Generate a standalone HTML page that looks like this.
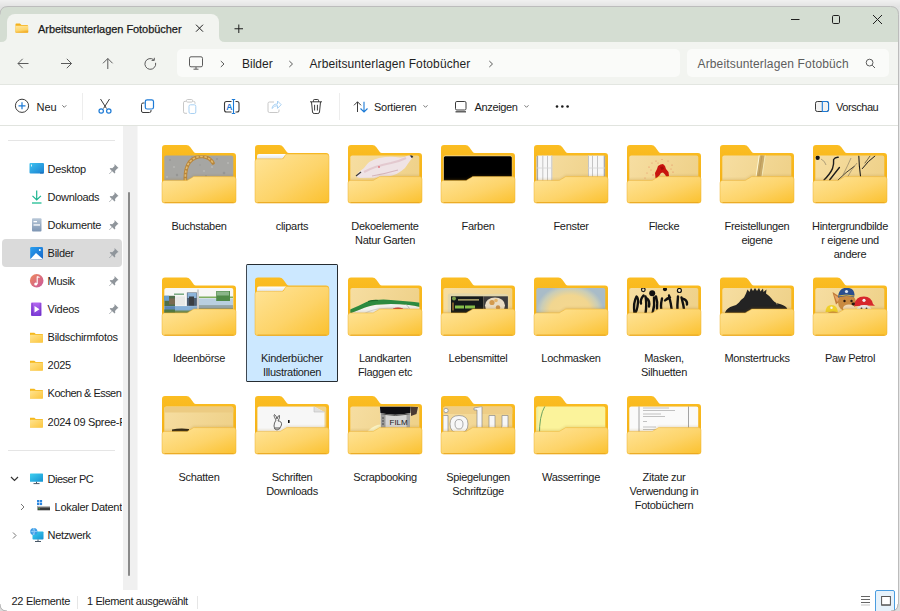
<!DOCTYPE html>
<html><head><meta charset="utf-8">
<style>
*{margin:0;padding:0;box-sizing:border-box}
html,body{width:900px;height:611px;overflow:hidden}
body{background:#fff;font-family:"Liberation Sans",sans-serif;position:relative;color:#1b1b1b}
.a{position:absolute}
</style></head><body>
<div class="a" style="left:0px;top:6px;width:900px;height:36px;background:#d4ddd2"></div><div class="a" style="left:0px;top:42px;width:900px;height:42px;background:#f2f4f0"></div><div class="a" style="left:7px;top:14px;width:212px;height:28px;background:#f2f4f0;border-radius:8px 8px 0 0"></div><div class="a" style="left:177px;top:49px;width:503px;height:28px;background:#fafbf9;border-radius:5px"></div><div class="a" style="left:687px;top:49px;width:202px;height:28px;background:#fafbf9;border-radius:5px"></div><div class="a" style="left:0px;top:84px;width:900px;height:1px;background:#e3e6e1"></div><div class="a" style="left:0px;top:125px;width:900px;height:1px;background:#e1e4df"></div><div class="a" style="left:38px;top:22.00px;font-size:11px;line-height:14px;letter-spacing:-0.05px;color:#1a1a1a;font-weight:normal;white-space:nowrap;-webkit-text-stroke:0.25px #1a1a1a;">Arbeitsunterlagen Fotobücher</div><div class="a" style="left:242px;top:56.00px;font-size:12px;line-height:16px;letter-spacing:0px;color:#1f1f1f;font-weight:normal;white-space:nowrap;">Bilder</div><div class="a" style="left:309.5px;top:56.00px;font-size:12px;line-height:16px;letter-spacing:0.1px;color:#1f1f1f;font-weight:normal;white-space:nowrap;">Arbeitsunterlagen Fotobücher</div><div class="a" style="left:697.5px;top:56.00px;font-size:12px;line-height:16px;letter-spacing:0.15px;color:#5d5d5d;font-weight:normal;white-space:nowrap;">Arbeitsunterlagen Fotobüch</div><div class="a" style="left:36.6px;top:100.00px;font-size:11px;line-height:14px;letter-spacing:-0.1px;color:#1b1b1b;font-weight:normal;white-space:nowrap;">Neu</div><div class="a" style="left:82px;top:93px;width:1px;height:27px;background:#ededed"></div><div class="a" style="left:339px;top:93px;width:1px;height:27px;background:#ededed"></div><div class="a" style="left:374px;top:100.00px;font-size:11px;line-height:14px;letter-spacing:-0.25px;color:#1b1b1b;font-weight:normal;white-space:nowrap;">Sortieren</div><div class="a" style="left:474.5px;top:100.00px;font-size:11px;line-height:14px;letter-spacing:-0.35px;color:#1b1b1b;font-weight:normal;white-space:nowrap;">Anzeigen</div><div class="a" style="left:836px;top:100.00px;font-size:11px;line-height:14px;letter-spacing:-0.45px;color:#1b1b1b;font-weight:normal;white-space:nowrap;">Vorschau</div><div class="a" style="left:8px;top:140px;width:107px;height:1px;background:#e5e5e5"></div><div class="a" style="left:2px;top:239px;width:120px;height:28px;background:#dadada;border-radius:4px"></div><div class="a" style="left:47.6px;top:162.00px;font-size:11px;line-height:14px;letter-spacing:-0.3px;color:#1b1b1b;font-weight:normal;white-space:nowrap;">Desktop</div><div class="a" style="left:47.6px;top:190.00px;font-size:11px;line-height:14px;letter-spacing:-0.3px;color:#1b1b1b;font-weight:normal;white-space:nowrap;">Downloads</div><div class="a" style="left:47.6px;top:218.00px;font-size:11px;line-height:14px;letter-spacing:-0.3px;color:#1b1b1b;font-weight:normal;white-space:nowrap;">Dokumente</div><div class="a" style="left:47.6px;top:246.00px;font-size:11px;line-height:14px;letter-spacing:-0.3px;color:#1b1b1b;font-weight:normal;white-space:nowrap;">Bilder</div><div class="a" style="left:47.6px;top:274.00px;font-size:11px;line-height:14px;letter-spacing:-0.3px;color:#1b1b1b;font-weight:normal;white-space:nowrap;">Musik</div><div class="a" style="left:47.6px;top:302.00px;font-size:11px;line-height:14px;letter-spacing:-0.3px;color:#1b1b1b;font-weight:normal;white-space:nowrap;">Videos</div><div class="a" style="left:47.6px;top:330.00px;font-size:11px;line-height:14px;letter-spacing:-0.3px;color:#1b1b1b;font-weight:normal;white-space:nowrap;width:74.5px;overflow:hidden;">Bildschirmfotos</div><div class="a" style="left:47.6px;top:358.00px;font-size:11px;line-height:14px;letter-spacing:-0.3px;color:#1b1b1b;font-weight:normal;white-space:nowrap;width:74.5px;overflow:hidden;">2025</div><div class="a" style="left:47.6px;top:386.00px;font-size:11px;line-height:14px;letter-spacing:-0.55px;color:#1b1b1b;font-weight:normal;white-space:nowrap;width:74.5px;overflow:hidden;">Kochen &amp; Essen</div><div class="a" style="left:47.6px;top:415.00px;font-size:11px;line-height:14px;letter-spacing:-0.3px;color:#1b1b1b;font-weight:normal;white-space:nowrap;width:74.5px;overflow:hidden;">2024 09 Spree-Fahrt</div><div class="a" style="left:8px;top:450px;width:107px;height:1px;background:#e5e5e5"></div><div class="a" style="left:47.6px;top:472.00px;font-size:11px;line-height:14px;letter-spacing:-0.5px;color:#1b1b1b;font-weight:normal;white-space:nowrap;">Dieser PC</div><div class="a" style="left:54.6px;top:500.00px;font-size:11px;line-height:14px;letter-spacing:-0.3px;color:#1b1b1b;font-weight:normal;white-space:nowrap;width:67.5px;overflow:hidden;">Lokaler Datenträger (C:)</div><div class="a" style="left:47.6px;top:528.00px;font-size:11px;line-height:14px;letter-spacing:-0.35px;color:#1b1b1b;font-weight:normal;white-space:nowrap;">Netzwerk</div><div class="a" style="left:123px;top:126px;width:14px;height:464px;background:#f0f0f0"></div><div class="a" style="left:137px;top:126px;width:1px;height:464px;background:#f7f7f7"></div><div class="a" style="left:128px;top:192px;width:2px;height:384px;background:#8a8a8a;border-radius:1px"></div><div class="a" style="left:11.5px;top:594.00px;font-size:11px;line-height:14px;letter-spacing:-0.3px;color:#1b1b1b;font-weight:normal;white-space:nowrap;">22 Elemente</div><div class="a" style="left:77px;top:596px;width:1px;height:13px;background:#e6e6e6"></div><div class="a" style="left:87px;top:594.00px;font-size:11px;line-height:14px;letter-spacing:-0.38px;color:#1b1b1b;font-weight:normal;white-space:nowrap;">1 Element ausgewählt</div><div class="a" style="left:197px;top:596px;width:1px;height:13px;background:#e6e6e6"></div><div class="a" style="left:875px;top:590px;width:20px;height:23px;background:#e6f2fb;border:1px solid #4a9de0;border-radius:2px"></div><div class="a" style="left:246px;top:264px;width:92px;height:118px;background:#cce8ff;border:1px solid #262c31;border-left-color:#3e4852;border-radius:1.5px"></div><div class="a" style="left:139px;width:120px;text-align:center;top:219.00px;font-size:11px;line-height:14px;letter-spacing:-0.3px;color:#1b1b1b;font-weight:normal;white-space:nowrap;">Buchstaben</div><div class="a" style="left:232px;width:120px;text-align:center;top:219.00px;font-size:11px;line-height:14px;letter-spacing:-0.3px;color:#1b1b1b;font-weight:normal;white-space:nowrap;">cliparts</div><div class="a" style="left:325px;width:120px;text-align:center;top:219.00px;font-size:11px;line-height:14px;letter-spacing:-0.3px;color:#1b1b1b;font-weight:normal;white-space:nowrap;">Dekoelemente</div><div class="a" style="left:325px;width:120px;text-align:center;top:233.00px;font-size:11px;line-height:14px;letter-spacing:-0.3px;color:#1b1b1b;font-weight:normal;white-space:nowrap;">Natur Garten</div><div class="a" style="left:418px;width:120px;text-align:center;top:219.00px;font-size:11px;line-height:14px;letter-spacing:-0.3px;color:#1b1b1b;font-weight:normal;white-space:nowrap;">Farben</div><div class="a" style="left:511px;width:120px;text-align:center;top:219.00px;font-size:11px;line-height:14px;letter-spacing:-0.3px;color:#1b1b1b;font-weight:normal;white-space:nowrap;">Fenster</div><div class="a" style="left:604px;width:120px;text-align:center;top:219.00px;font-size:11px;line-height:14px;letter-spacing:-0.3px;color:#1b1b1b;font-weight:normal;white-space:nowrap;">Flecke</div><div class="a" style="left:697px;width:120px;text-align:center;top:219.00px;font-size:11px;line-height:14px;letter-spacing:-0.3px;color:#1b1b1b;font-weight:normal;white-space:nowrap;">Freistellungen</div><div class="a" style="left:697px;width:120px;text-align:center;top:233.00px;font-size:11px;line-height:14px;letter-spacing:-0.3px;color:#1b1b1b;font-weight:normal;white-space:nowrap;">eigene</div><div class="a" style="left:790px;width:120px;text-align:center;top:219.00px;font-size:11px;line-height:14px;letter-spacing:-0.3px;color:#1b1b1b;font-weight:normal;white-space:nowrap;">Hintergrundbilde</div><div class="a" style="left:790px;width:120px;text-align:center;top:233.00px;font-size:11px;line-height:14px;letter-spacing:-0.3px;color:#1b1b1b;font-weight:normal;white-space:nowrap;">r eigene und</div><div class="a" style="left:790px;width:120px;text-align:center;top:247.00px;font-size:11px;line-height:14px;letter-spacing:-0.3px;color:#1b1b1b;font-weight:normal;white-space:nowrap;">andere</div><div class="a" style="left:139px;width:120px;text-align:center;top:351.00px;font-size:11px;line-height:14px;letter-spacing:-0.3px;color:#1b1b1b;font-weight:normal;white-space:nowrap;">Ideenbörse</div><div class="a" style="left:232px;width:120px;text-align:center;top:351.00px;font-size:11px;line-height:14px;letter-spacing:-0.3px;color:#1b1b1b;font-weight:normal;white-space:nowrap;">Kinderbücher</div><div class="a" style="left:232px;width:120px;text-align:center;top:365.00px;font-size:11px;line-height:14px;letter-spacing:-0.3px;color:#1b1b1b;font-weight:normal;white-space:nowrap;">Illustrationen</div><div class="a" style="left:325px;width:120px;text-align:center;top:351.00px;font-size:11px;line-height:14px;letter-spacing:-0.3px;color:#1b1b1b;font-weight:normal;white-space:nowrap;">Landkarten</div><div class="a" style="left:325px;width:120px;text-align:center;top:365.00px;font-size:11px;line-height:14px;letter-spacing:-0.3px;color:#1b1b1b;font-weight:normal;white-space:nowrap;">Flaggen etc</div><div class="a" style="left:418px;width:120px;text-align:center;top:351.00px;font-size:11px;line-height:14px;letter-spacing:-0.3px;color:#1b1b1b;font-weight:normal;white-space:nowrap;">Lebensmittel</div><div class="a" style="left:511px;width:120px;text-align:center;top:351.00px;font-size:11px;line-height:14px;letter-spacing:-0.3px;color:#1b1b1b;font-weight:normal;white-space:nowrap;">Lochmasken</div><div class="a" style="left:604px;width:120px;text-align:center;top:351.00px;font-size:11px;line-height:14px;letter-spacing:-0.3px;color:#1b1b1b;font-weight:normal;white-space:nowrap;">Masken,</div><div class="a" style="left:604px;width:120px;text-align:center;top:365.00px;font-size:11px;line-height:14px;letter-spacing:-0.3px;color:#1b1b1b;font-weight:normal;white-space:nowrap;">Silhuetten</div><div class="a" style="left:697px;width:120px;text-align:center;top:351.00px;font-size:11px;line-height:14px;letter-spacing:-0.3px;color:#1b1b1b;font-weight:normal;white-space:nowrap;">Monstertrucks</div><div class="a" style="left:790px;width:120px;text-align:center;top:351.00px;font-size:11px;line-height:14px;letter-spacing:-0.3px;color:#1b1b1b;font-weight:normal;white-space:nowrap;">Paw Petrol</div><div class="a" style="left:139px;width:120px;text-align:center;top:470.00px;font-size:11px;line-height:14px;letter-spacing:-0.3px;color:#1b1b1b;font-weight:normal;white-space:nowrap;">Schatten</div><div class="a" style="left:232px;width:120px;text-align:center;top:470.00px;font-size:11px;line-height:14px;letter-spacing:-0.3px;color:#1b1b1b;font-weight:normal;white-space:nowrap;">Schriften</div><div class="a" style="left:232px;width:120px;text-align:center;top:484.00px;font-size:11px;line-height:14px;letter-spacing:-0.3px;color:#1b1b1b;font-weight:normal;white-space:nowrap;">Downloads</div><div class="a" style="left:325px;width:120px;text-align:center;top:470.00px;font-size:11px;line-height:14px;letter-spacing:-0.3px;color:#1b1b1b;font-weight:normal;white-space:nowrap;">Scrapbooking</div><div class="a" style="left:418px;width:120px;text-align:center;top:470.00px;font-size:11px;line-height:14px;letter-spacing:-0.3px;color:#1b1b1b;font-weight:normal;white-space:nowrap;">Spiegelungen</div><div class="a" style="left:418px;width:120px;text-align:center;top:484.00px;font-size:11px;line-height:14px;letter-spacing:-0.3px;color:#1b1b1b;font-weight:normal;white-space:nowrap;">Schriftzüge</div><div class="a" style="left:511px;width:120px;text-align:center;top:470.00px;font-size:11px;line-height:14px;letter-spacing:-0.3px;color:#1b1b1b;font-weight:normal;white-space:nowrap;">Wasserringe</div><div class="a" style="left:604px;width:120px;text-align:center;top:470.00px;font-size:11px;line-height:14px;letter-spacing:-0.3px;color:#1b1b1b;font-weight:normal;white-space:nowrap;">Zitate zur</div><div class="a" style="left:604px;width:120px;text-align:center;top:484.00px;font-size:11px;line-height:14px;letter-spacing:-0.3px;color:#1b1b1b;font-weight:normal;white-space:nowrap;">Verwendung in</div><div class="a" style="left:604px;width:120px;text-align:center;top:498.00px;font-size:11px;line-height:14px;letter-spacing:-0.3px;color:#1b1b1b;font-weight:normal;white-space:nowrap;">Fotobüchern</div>
<svg class="a" style="left:0;top:0" width="900" height="611" viewBox="0 0 900 611">
<path d="M1,42 L7,42 L7,36 Q7,42 1,42Z" fill="#f2f4f0"/><path d="M219,36 Q219,42 225,42 L219,42Z" fill="#f2f4f0"/><defs><linearGradient id="tabF" x1="0" y1="0" x2="0.3" y2="1"><stop offset="0" stop-color="#ffe69e"/><stop offset="0.7" stop-color="#fdd56a"/><stop offset="1" stop-color="#f3b02a"/></linearGradient></defs><path d="M15.5,24.3 q0,-0.8 0.8,-0.8 h3.6 l1.6,1.5 h6.3 v7.5 h-12.3z" fill="#f4b11c"/><rect x="15.5" y="25.8" width="12.8" height="7" rx="0.8" fill="url(#tabF)"/><path d="M196,24.7 L203,31.7 M203,24.7 L196,31.7" fill="none" stroke="#1f1f1f" stroke-width="1" stroke="#3a3a3a"/><path d="M238.8,24.5 V33 M234.5,28.75 H243" fill="none" stroke="#1f1f1f" stroke-width="1" stroke="#3a3a3a"/><path d="M791,19.5 H799.5" fill="none" stroke="#1f1f1f" stroke-width="1"/><rect x="832.5" y="15.5" width="7" height="8" rx="1.2" fill="none" stroke="#1f1f1f" stroke-width="1"/><path d="M873,15 L882,24 M882,15 L873,24" fill="none" stroke="#1f1f1f" stroke-width="1"/><path d="M28.5,63.5 H18 M22.7,58.8 L18,63.5 L22.7,68.2" fill="none" stroke="#5b5b5b" stroke-width="1"/><path d="M61,63.5 H71.5 M66.8,58.8 L71.5,63.5 L66.8,68.2" fill="none" stroke="#5b5b5b" stroke-width="1"/><path d="M107.8,69 V58.5 M103,63.3 L107.8,58.5 L112.6,63.3" fill="none" stroke="#5b5b5b" stroke-width="1"/><path d="M155.6,62.8 A5.4,5.4 0 1 1 153.8,59.8 M154.3,57.8 V60.4 H151.6" fill="none" stroke="#5b5b5b" stroke-width="1"/><rect x="189.5" y="56.8" width="13" height="10" rx="1.5" fill="none" stroke="#5b5b5b" stroke-width="1" stroke="#4a4a4a"/><path d="M193.5,69.2 H198.5 M196,67 V69" fill="none" stroke="#5b5b5b" stroke-width="1" stroke="#4a4a4a"/><path d="M220.8,61 L224,64 L220.8,67" fill="none" stroke="#5b5b5b" stroke-width="1" stroke="#4a4a4a"/><path d="M289.3,61 L292.5,64 L289.3,67" fill="none" stroke="#5b5b5b" stroke-width="1" stroke="#4a4a4a"/><path d="M489.3,61 L492.5,64 L489.3,67" fill="none" stroke="#5b5b5b" stroke-width="1" stroke="#4a4a4a"/><circle cx="869.6" cy="62.6" r="3.4" fill="none" stroke="#5b5b5b" stroke-width="1" stroke="#333"/><path d="M872.2,65.2 L875,68" fill="none" stroke="#5b5b5b" stroke-width="1" stroke="#333" stroke-width="1.2"/><circle cx="22" cy="105.8" r="6.6" fill="none" stroke="#3b3b3b" stroke-width="1"/><path d="M22,102.3 V109.3 M18.5,105.8 H25.5" fill="none" stroke="#1c7ad6" stroke-width="1.2"/><path d="M62.3,105.3 L64.3,107.3 L66.3,105.3" fill="none" stroke="#666" stroke-width="0.9"/><path d="M100.5,99 L106.5,108.5 M109.5,99 L103.5,108.5" fill="none" stroke="#3b3b3b" stroke-width="1"/><circle cx="101.2" cy="111" r="2.2" fill="none" stroke="#1c7ad6" stroke-width="1.2"/><circle cx="108.8" cy="111" r="2.2" fill="none" stroke="#1c7ad6" stroke-width="1.2"/><path d="M144.5,103 h-1.5 a1.5,1.5 0 0 0 -1.5,1.5 v6.5 a1.5,1.5 0 0 0 1.5,1.5 h6.5 a1.5,1.5 0 0 0 1.5,-1.5 v-1" fill="none" stroke="#3b3b3b" stroke-width="1"/><rect x="145.3" y="99.8" width="8.2" height="9.2" rx="1.8" fill="none" stroke="#1c7ad6" stroke-width="1.2"/><path d="M186,101.3 h-1 a1.5,1.5 0 0 0 -1.5,1.5 v9 a1.5,1.5 0 0 0 1.5,1.5 h2 M192.5,101.3 h1 a1.5,1.5 0 0 1 1.5,1.5 v1" fill="none" stroke="#c8c8c8" stroke-width="1"/><rect x="186.5" y="99.5" width="6" height="2.6" rx="1" fill="none" stroke="#c8c8c8"/><rect x="189" y="104.8" width="6.8" height="8.7" rx="1.5" fill="none" stroke="#a9d1f3" stroke-width="1"/><path d="M231.5,101.5 h-5 a2,2 0 0 0 -2,2 v6.5 a2,2 0 0 0 2,2 h5 M235.5,101.5 h1.5 a2,2 0 0 1 2,2 v6.5 a2,2 0 0 1 -2,2 h-1.5" fill="none" stroke="#3b3b3b" stroke-width="1.1"/><path d="M233.5,99.5 V113.5 M231.8,99.5 H235.2 M231.8,113.5 H235.2" fill="none" stroke="#1c7ad6" stroke-width="1.1"/><text x="226.2" y="110.2" font-family="Liberation Sans" font-size="8.5" font-weight="bold" fill="#1c7ad6">A</text><path d="M274,102 h-4.5 a1.5,1.5 0 0 0 -1.5,1.5 v7.5 a1.5,1.5 0 0 0 1.5,1.5 h8 a1.5,1.5 0 0 0 1.5,-1.5 v-1.5" fill="none" stroke="#c8c8c8"/><path d="M272,108.5 q0.5,-4.5 5.5,-4.5 v-3 l3.7,3.7 l-3.7,3.7 v-2.8 q-3.5,0 -5.5,2.9z" fill="none" stroke="#a9d1f3" stroke-width="1"/><path d="M310,101.8 H322 M313.5,101.8 V100.3 a0.8,0.8 0 0 1 0.8,-0.8 h3.4 a0.8,0.8 0 0 1 0.8,0.8 v1.5 M311.5,102 l1,10 a1.7,1.7 0 0 0 1.7,1.5 h3.6 a1.7,1.7 0 0 0 1.7,-1.5 l1,-10 M314.6,104.8 V110.5 M317.4,104.8 V110.5" fill="none" stroke="#3b3b3b" stroke-width="1"/><path d="M357.5,112 V101.8 M354,105.3 L357.5,101.8 L361,105.3" fill="none" stroke="#3b3b3b" stroke-width="1"/><path d="M364,101.8 V112 M360.5,108.5 L364,112 L367.5,108.5" fill="none" stroke="#1c7ad6" stroke-width="1.1"/><path d="M423.5,105.3 L425.5,107.3 L427.5,105.3" fill="none" stroke="#666" stroke-width="0.9"/><rect x="455.5" y="101.5" width="10.5" height="8.5" rx="1.3" fill="none" stroke="#3b3b3b" stroke-width="1"/><path d="M455.5,111.8 H466" fill="none" stroke="#3b3b3b" stroke-width="1.2"/><path d="M524.5,105.3 L526.5,107.3 L528.5,105.3" fill="none" stroke="#666" stroke-width="0.9"/><circle cx="557" cy="106.5" r="1.3" fill="#1b1b1b"/><circle cx="562.3" cy="106.5" r="1.3" fill="#1b1b1b"/><circle cx="567.6" cy="106.5" r="1.3" fill="#1b1b1b"/><rect x="815.5" y="101.5" width="13" height="10" rx="1.8" fill="#f2f2f2" stroke="#3b3b3b"/><path d="M822.3,101.5 h4.5 a1.8,1.8 0 0 1 1.8,1.8 v6.4 a1.8,1.8 0 0 1 -1.8,1.8 h-4.5 z" fill="none" stroke="#1c7ad6" stroke-width="1.1"/><path d="M114.5,164.0 l4,4 l-1.2,0.6 l-2.3,2.3 l0.3,1.8 l-0.8,0.8 l-2.2,-2.2 l-2.8,2.8 l-0.4,0 l0,-0.4 l2.8,-2.8 l-2.2,-2.2 l0.8,-0.8 l1.8,0.3 l2.3,-2.3z" fill="#8f959b"/><path d="M114.5,192.0 l4,4 l-1.2,0.6 l-2.3,2.3 l0.3,1.8 l-0.8,0.8 l-2.2,-2.2 l-2.8,2.8 l-0.4,0 l0,-0.4 l2.8,-2.8 l-2.2,-2.2 l0.8,-0.8 l1.8,0.3 l2.3,-2.3z" fill="#8f959b"/><path d="M114.5,220.0 l4,4 l-1.2,0.6 l-2.3,2.3 l0.3,1.8 l-0.8,0.8 l-2.2,-2.2 l-2.8,2.8 l-0.4,0 l0,-0.4 l2.8,-2.8 l-2.2,-2.2 l0.8,-0.8 l1.8,0.3 l2.3,-2.3z" fill="#8f959b"/><path d="M114.5,248.0 l4,4 l-1.2,0.6 l-2.3,2.3 l0.3,1.8 l-0.8,0.8 l-2.2,-2.2 l-2.8,2.8 l-0.4,0 l0,-0.4 l2.8,-2.8 l-2.2,-2.2 l0.8,-0.8 l1.8,0.3 l2.3,-2.3z" fill="#8f959b"/><path d="M114.5,276.0 l4,4 l-1.2,0.6 l-2.3,2.3 l0.3,1.8 l-0.8,0.8 l-2.2,-2.2 l-2.8,2.8 l-0.4,0 l0,-0.4 l2.8,-2.8 l-2.2,-2.2 l0.8,-0.8 l1.8,0.3 l2.3,-2.3z" fill="#8f959b"/><path d="M114.5,304.0 l4,4 l-1.2,0.6 l-2.3,2.3 l0.3,1.8 l-0.8,0.8 l-2.2,-2.2 l-2.8,2.8 l-0.4,0 l0,-0.4 l2.8,-2.8 l-2.2,-2.2 l0.8,-0.8 l1.8,0.3 l2.3,-2.3z" fill="#8f959b"/><defs><linearGradient id="gDesk" x1="0" y1="0" x2="1" y2="1"><stop offset="0" stop-color="#3ec3f0"/><stop offset="1" stop-color="#1a7fd0"/></linearGradient><linearGradient id="gMus" x1="0" y1="0" x2="1" y2="1"><stop offset="0" stop-color="#f08a5a"/><stop offset="1" stop-color="#c8569e"/></linearGradient><linearGradient id="gVid" x1="0" y1="0" x2="0" y2="1"><stop offset="0" stop-color="#b468f0"/><stop offset="1" stop-color="#7a3bd6"/></linearGradient><linearGradient id="gDoc" x1="0" y1="0" x2="0" y2="1"><stop offset="0" stop-color="#b9c8d8"/><stop offset="1" stop-color="#7d95b3"/></linearGradient><linearGradient id="gPic" x1="0" y1="0" x2="1" y2="1"><stop offset="0" stop-color="#2aa0f0"/><stop offset="1" stop-color="#1666c8"/></linearGradient><linearGradient id="gSF" x1="0" y1="0" x2="1" y2="1"><stop offset="0" stop-color="#ffe38f"/><stop offset="1" stop-color="#fcc63e"/></linearGradient><linearGradient id="gPC" x1="0" y1="0" x2="1" y2="1"><stop offset="0" stop-color="#3fd0f0"/><stop offset="1" stop-color="#1592d2"/></linearGradient></defs><rect x="29.5" y="163" width="14.5" height="10.5" rx="1" fill="url(#gDesk)"/><rect x="31" y="164.5" width="0.8" height="2" fill="#fff"/><rect x="40" y="172.5" width="3.5" height="1" fill="#1764b0"/><path d="M36.7,190.5 V200 M32.5,195.8 L36.7,200 L40.9,195.8" fill="none" stroke="#1cb58f" stroke-width="1.2"/><rect x="32" y="202.3" width="9.5" height="1.4" fill="#2fc29a"/><rect x="32" y="218.2" width="9.5" height="13.3" rx="1" fill="url(#gDoc)"/><rect x="33.5" y="221" width="3.5" height="1.3" fill="#fff"/><rect x="33.5" y="224.3" width="6.5" height="1.3" fill="#fff"/><rect x="30.2" y="247" width="12.8" height="12.3" rx="1.3" fill="url(#gPic)"/><path d="M30.5,259 L36,253 L42.8,259 Z" fill="#fff"/><circle cx="39.8" cy="250" r="1" fill="#fff"/><circle cx="36.7" cy="280.8" r="6.8" fill="url(#gMus)"/><path d="M37.2,276.5 V284 M37.2,276.5 l2.3,1" fill="none" stroke="#fff" stroke-width="1.1"/><circle cx="35.8" cy="284" r="1.6" fill="#fff"/><rect x="31" y="302.5" width="10.5" height="13.5" rx="1" fill="url(#gVid)"/><path d="M34.5,306 L39.5,309.3 L34.5,312.6Z" fill="#fff"/><path d="M32.2,303.5 v11.5 M40.3,303.5 v11.5" stroke="#5a22a8" stroke-width="0.8" stroke-dasharray="1,1"/><path d="M30,332.8 h4.3 l1.5,1.2 h7 v8.6 h-12.8z" fill="#f5b81c"/><rect x="30" y="334.8" width="12.8" height="7.8" rx="0.6" fill="url(#gSF)"/><path d="M30,360.8 h4.3 l1.5,1.2 h7 v8.6 h-12.8z" fill="#f5b81c"/><rect x="30" y="362.8" width="12.8" height="7.8" rx="0.6" fill="url(#gSF)"/><path d="M30,388.8 h4.3 l1.5,1.2 h7 v8.6 h-12.8z" fill="#f5b81c"/><rect x="30" y="390.8" width="12.8" height="7.8" rx="0.6" fill="url(#gSF)"/><path d="M30,417.8 h4.3 l1.5,1.2 h7 v8.6 h-12.8z" fill="#f5b81c"/><rect x="30" y="419.8" width="12.8" height="7.8" rx="0.6" fill="url(#gSF)"/><path d="M11,477 L14.5,480.5 L18,477" fill="none" stroke="#333" stroke-width="1.2"/><rect x="30" y="473.5" width="13" height="8.3" rx="0.6" fill="url(#gPC)"/><path d="M36.5,481.8 v1.6 M33.5,483.6 h6" stroke="#345" stroke-width="0.9"/><path d="M21,504 L24,507 L21,510" fill="none" stroke="#777" stroke-width="1"/><rect x="37" y="500" width="2.3" height="2.3" fill="#2b86e0"/><rect x="39.8" y="500" width="2.3" height="2.3" fill="#2b86e0"/><rect x="37" y="502.8" width="2.3" height="2.3" fill="#2b86e0"/><rect x="39.8" y="502.8" width="2.3" height="2.3" fill="#2b86e0"/><path d="M37.5,506 h12.5 v4.3 h-12.5z" fill="#3a3a3a"/><path d="M37.5,506 h12.5 v1.4 h-12.5z" fill="#bbb"/><rect x="38.5" y="508.2" width="1.2" height="1" fill="#4c4"/><path d="M13,532.5 L16,535.5 L13,538.5" fill="none" stroke="#777" stroke-width="1"/><rect x="32.5" y="531.5" width="11" height="8" rx="0.8" fill="url(#gPC)"/><path d="M38,539.5 v1.5 M35,541.5 h6" stroke="#345" stroke-width="0.9"/><circle cx="33.8" cy="531.5" r="3.6" fill="#3d9de6"/><path d="M30.5,531.5 h6.6 M33.8,528 q-2,3.5 0,7 q2,-3.5 0,-7" fill="none" stroke="#bfe3ff" stroke-width="0.5"/><path d="M861,596.5 h9 M861,599.5 h9 M861,602.5 h9" stroke="#555" stroke-width="0.9"/><path d="M861,605 h9" stroke="#c5c5c5" stroke-width="1"/><rect x="881.6" y="596.5" width="8.8" height="8.3" fill="#fff" stroke="#555" stroke-width="1"/><path d="M881.3,605.3 h9.4" stroke="#666" stroke-width="1"/><defs><linearGradient id="fBack" x1="0" y1="0" x2="0" y2="1"><stop offset="0" stop-color="#fbbd22"/><stop offset="1" stop-color="#f0ab12"/></linearGradient><linearGradient id="fFront" x1="0" y1="0" x2="1" y2="1"><stop offset="0" stop-color="#ffe498"/><stop offset="0.55" stop-color="#fdd46a"/><stop offset="1" stop-color="#fbc12e"/></linearGradient><linearGradient id="fPaper" x1="0" y1="0" x2="0" y2="1"><stop offset="0" stop-color="#ffffff"/><stop offset="1" stop-color="#dfe3ea"/></linearGradient><linearGradient id="thBG" x1="0" y1="0" x2="1" y2="0.3"><stop offset="0" stop-color="#f7dfa4"/><stop offset="1" stop-color="#efd28b"/></linearGradient><filter id="fblur" x="-10%" y="-10%" width="120%" height="120%"><feGaussianBlur stdDeviation="1"/></filter><clipPath id="inset"><rect x="2.3" y="10.5" width="69" height="28" rx="2"/></clipPath><radialGradient id="lochG" gradientUnits="userSpaceOnUse" cx="36" cy="34" r="34" gradientTransform="translate(36 34) scale(1 .8) translate(-36 -34)"><stop offset="0" stop-color="#f5d890"/><stop offset="0.6" stop-color="#f1d690"/><stop offset="0.85" stop-color="#c9cdb8"/><stop offset="1" stop-color="#a9bcc8"/></radialGradient></defs><g transform="translate(162,145)"><path d="M0,3 Q0,0 3,0 H24.3 Q26.8,0 28.4,2.2 L32,7.2 Q32.6,8 33.8,8 H71 Q74,8 74,11 V55 Q74,58 71,58 H3 Q0,58 0,55 Z" fill="url(#fBack)"/><g clip-path="url(#inset)"><rect x="0" y="0" width="74" height="40" fill="#a6a6a3"/><g fill="#939391" opacity=".8"><circle cx="8" cy="15" r="1"/><circle cx="15" cy="30" r="1.2"/><circle cx="55" cy="14" r="1"/><circle cx="62" cy="28" r="1.3"/><circle cx="44" cy="31" r="1"/><circle cx="30" cy="12" r="0.8"/><circle cx="38" cy="20" r="0.7"/></g><g fill="#bcbcb9" opacity=".8"><circle cx="12" cy="22" r="1"/><circle cx="50" cy="22" r="1.1"/><circle cx="66" cy="18" r="1"/><circle cx="42" cy="26" r="0.9"/><circle cx="5" cy="32" r="1"/></g><path d="M23.5,36 Q22.5,24 27.5,17 Q33,11 41,11.5 Q48,12.5 51,18" fill="none" stroke="#b8863c" stroke-width="3.6" stroke-linecap="round"/><path d="M23.5,36 Q22.5,24 27.5,17 Q33,11 41,11.5 Q48,12.5 51,18" fill="none" stroke="#e2bb70" stroke-width="1.6" stroke-dasharray="2.5,1.5"/></g><g clip-path="url(#inset)"><path d="M0,37.9 Q0,35.4 2.5,35.4 H24.5 Q26.1,35.4 26.7,34.5 L30.3,32.5 Q30.9,31.599999999999998 32.5,31.599999999999998 H71.5 Q74,31.599999999999998 74,34.099999999999994 V55.5 Q74,58 71.5,58 H2.5 Q0,58 0,55.5 Z" transform="translate(0,-1.6)" fill="#9a6a10" opacity=".16" filter="url(#fblur)"/></g><path d="M0,37.9 Q0,35.4 2.5,35.4 H24.5 Q26.1,35.4 26.7,34.5 L30.3,32.5 Q30.9,31.599999999999998 32.5,31.599999999999998 H71.5 Q74,31.599999999999998 74,34.099999999999994 V55.5 Q74,58 71.5,58 H2.5 Q0,58 0,55.5 Z" fill="url(#fFront)" stroke="#efb32e" stroke-width="0.5"/><path d="M2.5,57.6 H71.5" stroke="#e9a51c" stroke-width="0.9"/></g><g transform="translate(255,145)"><path d="M0,3 Q0,0 3,0 H24.3 Q26.8,0 28.4,2.2 L32,7.2 Q32.6,8 33.8,8 H71 Q74,8 74,11 V55 Q74,58 71,58 H3 Q0,58 0,55 Z" fill="url(#fBack)"/><path d="M2,11 Q2,9 4,9 H31.5 L27,14.2 H2Z" fill="url(#fPaper)"/><path d="M0,16.3 Q0,13.8 2.5,13.8 H26.5 Q28.1,13.8 28.7,12.9 L30.3,9.9 Q30.9,9.0 32.5,9.0 H71.5 Q74,9.0 74,11.5 V55.5 Q74,58 71.5,58 H2.5 Q0,58 0,55.5 Z" fill="url(#fFront)" stroke="#efb32e" stroke-width="0.5"/><path d="M2.5,57.6 H71.5" stroke="#e9a51c" stroke-width="0.9"/></g><g transform="translate(348,145)"><path d="M0,3 Q0,0 3,0 H24.3 Q26.8,0 28.4,2.2 L32,7.2 Q32.6,8 33.8,8 H71 Q74,8 74,11 V55 Q74,58 71,58 H3 Q0,58 0,55 Z" fill="url(#fBack)"/><g clip-path="url(#inset)"><rect x="0" y="0" width="74" height="40" fill="url(#thBG)"/><path d="M8,31 Q11,26 16,23 Q21,15 31,13 Q42,11 52,12.5 Q57,12.5 60,10.5 L63,9.5 L64.5,12.5 Q61,17 57,23 Q49,30.5 40,31.5 Q26,33 14,33 Q9,33 8,31 Z" fill="#efe3e6"/><path d="M16,27 Q27,21 43,18 Q52,16 58,13" fill="none" stroke="#e3c9cf" stroke-width="2.2"/><path d="M24,31 Q36,29 50,25" fill="none" stroke="#d6b6bd" stroke-width="1.1"/><path d="M8,31 l5,-4" stroke="#3a3a3a" stroke-width="1.3"/><path d="M62,9 l2.5,3.5" stroke="#2a2a2a" stroke-width="2"/><circle cx="31" cy="22" r="0.9" fill="#e0707a"/></g><g clip-path="url(#inset)"><path d="M0,37.9 Q0,35.4 2.5,35.4 H24.5 Q26.1,35.4 26.7,34.5 L30.3,32.5 Q30.9,31.599999999999998 32.5,31.599999999999998 H71.5 Q74,31.599999999999998 74,34.099999999999994 V55.5 Q74,58 71.5,58 H2.5 Q0,58 0,55.5 Z" transform="translate(0,-1.6)" fill="#9a6a10" opacity=".16" filter="url(#fblur)"/></g><path d="M0,37.9 Q0,35.4 2.5,35.4 H24.5 Q26.1,35.4 26.7,34.5 L30.3,32.5 Q30.9,31.599999999999998 32.5,31.599999999999998 H71.5 Q74,31.599999999999998 74,34.099999999999994 V55.5 Q74,58 71.5,58 H2.5 Q0,58 0,55.5 Z" fill="url(#fFront)" stroke="#efb32e" stroke-width="0.5"/><path d="M2.5,57.6 H71.5" stroke="#e9a51c" stroke-width="0.9"/></g><g transform="translate(441,145)"><path d="M0,3 Q0,0 3,0 H24.3 Q26.8,0 28.4,2.2 L32,7.2 Q32.6,8 33.8,8 H71 Q74,8 74,11 V55 Q74,58 71,58 H3 Q0,58 0,55 Z" fill="url(#fBack)"/><g clip-path="url(#inset)"><rect x="0" y="0" width="74" height="40" fill="url(#thBG)"/><rect x="2.8" y="11.2" width="68" height="30" rx="1.5" fill="#000"/></g><g clip-path="url(#inset)"><path d="M0,37.9 Q0,35.4 2.5,35.4 H24.5 Q26.1,35.4 26.7,34.5 L30.3,32.5 Q30.9,31.599999999999998 32.5,31.599999999999998 H71.5 Q74,31.599999999999998 74,34.099999999999994 V55.5 Q74,58 71.5,58 H2.5 Q0,58 0,55.5 Z" transform="translate(0,-1.6)" fill="#9a6a10" opacity=".16" filter="url(#fblur)"/></g><path d="M0,37.9 Q0,35.4 2.5,35.4 H24.5 Q26.1,35.4 26.7,34.5 L30.3,32.5 Q30.9,31.599999999999998 32.5,31.599999999999998 H71.5 Q74,31.599999999999998 74,34.099999999999994 V55.5 Q74,58 71.5,58 H2.5 Q0,58 0,55.5 Z" fill="url(#fFront)" stroke="#efb32e" stroke-width="0.5"/><path d="M2.5,57.6 H71.5" stroke="#e9a51c" stroke-width="0.9"/></g><g transform="translate(534,145)"><path d="M0,3 Q0,0 3,0 H24.3 Q26.8,0 28.4,2.2 L32,7.2 Q32.6,8 33.8,8 H71 Q74,8 74,11 V55 Q74,58 71,58 H3 Q0,58 0,55 Z" fill="url(#fBack)"/><g clip-path="url(#inset)"><rect x="0" y="0" width="74" height="40" fill="url(#thBG)"/><rect x="2.6" y="10.5" width="15.6" height="30" fill="#f7f7f7"/><path d="M3.3,10 V40" stroke="#a8a8a8" stroke-width="1.6"/><path d="M8.8,10 V40 M13.5,10 V40 M17.8,10 V40" stroke="#c4c4c4" stroke-width="1"/><path d="M2,23 H18" stroke="#d6d6d6" stroke-width="0.8"/><rect x="54" y="10.5" width="17" height="30" fill="#f7f7f7"/><path d="M54.5,10 V40 M58.5,10 V40 M63.5,10 V40" stroke="#c4c4c4" stroke-width="1"/><path d="M70.5,10 V40" stroke="#a8a8a8" stroke-width="1.6"/><path d="M54,23 H71" stroke="#d6d6d6" stroke-width="0.8"/></g><g clip-path="url(#inset)"><path d="M0,37.9 Q0,35.4 2.5,35.4 H24.5 Q26.1,35.4 26.7,34.5 L30.3,32.5 Q30.9,31.599999999999998 32.5,31.599999999999998 H71.5 Q74,31.599999999999998 74,34.099999999999994 V55.5 Q74,58 71.5,58 H2.5 Q0,58 0,55.5 Z" transform="translate(0,-1.6)" fill="#9a6a10" opacity=".16" filter="url(#fblur)"/></g><path d="M0,37.9 Q0,35.4 2.5,35.4 H24.5 Q26.1,35.4 26.7,34.5 L30.3,32.5 Q30.9,31.599999999999998 32.5,31.599999999999998 H71.5 Q74,31.599999999999998 74,34.099999999999994 V55.5 Q74,58 71.5,58 H2.5 Q0,58 0,55.5 Z" fill="url(#fFront)" stroke="#efb32e" stroke-width="0.5"/><path d="M2.5,57.6 H71.5" stroke="#e9a51c" stroke-width="0.9"/></g><g transform="translate(627,145)"><path d="M0,3 Q0,0 3,0 H24.3 Q26.8,0 28.4,2.2 L32,7.2 Q32.6,8 33.8,8 H71 Q74,8 74,11 V55 Q74,58 71,58 H3 Q0,58 0,55 Z" fill="url(#fBack)"/><g clip-path="url(#inset)"><rect x="0" y="0" width="74" height="40" fill="url(#thBG)"/><path d="M28.5,33 L28,28 L30,24 L31,21 L33.5,19.5 L36,19 L38,21 L39,24 L41.5,27 L42,31 L40,33 L38,29.5 L36,27.5 L34,28 L32,31 L30.5,33Z" fill="#c9140f"/><path d="M33,22 L36,21.5 L37,24 L34.5,25Z" fill="#a80c08"/><g fill="#dc4a3a" opacity=".6"><circle cx="22" cy="22" r=".6"/><circle cx="20" cy="28" r=".5"/><circle cx="45" cy="20" r=".6"/><circle cx="46" cy="27" r=".6"/><circle cx="29" cy="16" r=".6"/><circle cx="35" cy="14.5" r=".5"/><circle cx="18" cy="33" r=".5"/><circle cx="47" cy="33" r=".5"/><circle cx="25" cy="18" r=".5"/><circle cx="41" cy="16" r=".5"/><circle cx="26" cy="30" r=".7"/><circle cx="44" cy="24" r=".5"/><circle cx="31" cy="18" r=".5"/><circle cx="24" cy="25" r=".5"/></g></g><g clip-path="url(#inset)"><path d="M0,37.9 Q0,35.4 2.5,35.4 H24.5 Q26.1,35.4 26.7,34.5 L30.3,32.5 Q30.9,31.599999999999998 32.5,31.599999999999998 H71.5 Q74,31.599999999999998 74,34.099999999999994 V55.5 Q74,58 71.5,58 H2.5 Q0,58 0,55.5 Z" transform="translate(0,-1.6)" fill="#9a6a10" opacity=".16" filter="url(#fblur)"/></g><path d="M0,37.9 Q0,35.4 2.5,35.4 H24.5 Q26.1,35.4 26.7,34.5 L30.3,32.5 Q30.9,31.599999999999998 32.5,31.599999999999998 H71.5 Q74,31.599999999999998 74,34.099999999999994 V55.5 Q74,58 71.5,58 H2.5 Q0,58 0,55.5 Z" fill="url(#fFront)" stroke="#efb32e" stroke-width="0.5"/><path d="M2.5,57.6 H71.5" stroke="#e9a51c" stroke-width="0.9"/></g><g transform="translate(720,145)"><path d="M0,3 Q0,0 3,0 H24.3 Q26.8,0 28.4,2.2 L32,7.2 Q32.6,8 33.8,8 H71 Q74,8 74,11 V55 Q74,58 71,58 H3 Q0,58 0,55 Z" fill="url(#fBack)"/><g clip-path="url(#inset)"><rect x="0" y="0" width="74" height="40" fill="url(#thBG)"/><path d="M39.5,10 L45,10 L40.5,40 L35,40Z" fill="#c9aa68"/><path d="M39.3,10 L34.8,40" stroke="#fff9d8" stroke-width="1"/><path d="M45.2,10 L40.7,40" stroke="#f5ecc0" stroke-width="0.9"/><path d="M42,10 L37.5,40" stroke="#b6965a" stroke-width="0.8"/></g><g clip-path="url(#inset)"><path d="M0,37.9 Q0,35.4 2.5,35.4 H24.5 Q26.1,35.4 26.7,34.5 L30.3,32.5 Q30.9,31.599999999999998 32.5,31.599999999999998 H71.5 Q74,31.599999999999998 74,34.099999999999994 V55.5 Q74,58 71.5,58 H2.5 Q0,58 0,55.5 Z" transform="translate(0,-1.6)" fill="#9a6a10" opacity=".16" filter="url(#fblur)"/></g><path d="M0,37.9 Q0,35.4 2.5,35.4 H24.5 Q26.1,35.4 26.7,34.5 L30.3,32.5 Q30.9,31.599999999999998 32.5,31.599999999999998 H71.5 Q74,31.599999999999998 74,34.099999999999994 V55.5 Q74,58 71.5,58 H2.5 Q0,58 0,55.5 Z" fill="url(#fFront)" stroke="#efb32e" stroke-width="0.5"/><path d="M2.5,57.6 H71.5" stroke="#e9a51c" stroke-width="0.9"/></g><g transform="translate(813,145)"><path d="M0,3 Q0,0 3,0 H24.3 Q26.8,0 28.4,2.2 L32,7.2 Q32.6,8 33.8,8 H71 Q74,8 74,11 V55 Q74,58 71,58 H3 Q0,58 0,55 Z" fill="url(#fBack)"/><g clip-path="url(#inset)"><rect x="0" y="0" width="74" height="40" fill="url(#thBG)"/><circle cx="4.6" cy="12.8" r="2.2" fill="#141414"/><g fill="none" stroke="#1c1c1c" stroke-linecap="round"><path d="M11,35 Q17,29 19.5,23.6 Q21,19 20.6,14.5 Q22,12 25.2,12.2" stroke-width="1.4"/><path d="M16.6,35 Q22,28 26.4,22.5" stroke-width="1.4"/><path d="M25,35 Q33,27 41.3,21.3" stroke-width="0.8"/><path d="M47.6,32 Q46,20 45.8,11" stroke-width="1.1"/><path d="M49.3,23.6 Q55,16 61.9,11" stroke-width="1"/><path d="M52,18 Q55,14 57,11" stroke-width="0.6"/></g><g fill="none" stroke="#6b6255" stroke-width="0.5"><path d="M8,14 Q12,16 13,20 M30,30 Q35,20 38,13 M34,33 Q38,25 44,18"/></g></g><g clip-path="url(#inset)"><path d="M0,37.9 Q0,35.4 2.5,35.4 H24.5 Q26.1,35.4 26.7,34.5 L30.3,32.5 Q30.9,31.599999999999998 32.5,31.599999999999998 H71.5 Q74,31.599999999999998 74,34.099999999999994 V55.5 Q74,58 71.5,58 H2.5 Q0,58 0,55.5 Z" transform="translate(0,-1.6)" fill="#9a6a10" opacity=".16" filter="url(#fblur)"/></g><path d="M0,37.9 Q0,35.4 2.5,35.4 H24.5 Q26.1,35.4 26.7,34.5 L30.3,32.5 Q30.9,31.599999999999998 32.5,31.599999999999998 H71.5 Q74,31.599999999999998 74,34.099999999999994 V55.5 Q74,58 71.5,58 H2.5 Q0,58 0,55.5 Z" fill="url(#fFront)" stroke="#efb32e" stroke-width="0.5"/><path d="M2.5,57.6 H71.5" stroke="#e9a51c" stroke-width="0.9"/></g><g transform="translate(162,277.5)"><path d="M0,3 Q0,0 3,0 H24.3 Q26.8,0 28.4,2.2 L32,7.2 Q32.6,8 33.8,8 H71 Q74,8 74,11 V55 Q74,58 71,58 H3 Q0,58 0,55 Z" fill="url(#fBack)"/><g clip-path="url(#inset)"><rect x="0" y="0" width="74" height="40" fill="#f7f7f5"/><rect x="2" y="18.3" width="11" height="10.3" fill="#4f6e4a"/><rect x="2" y="18.3" width="5" height="5" fill="#6a9fd0"/><rect x="7" y="21" width="6" height="6" fill="#7a6a52"/><rect x="12" y="16" width="10" height="1.4" fill="#6fa37a"/><rect x="13" y="19" width="10" height="9" fill="#e8e8e6"/><rect x="24.9" y="15" width="10" height="13.4" fill="#4d5d70"/><rect x="25.5" y="15.5" width="9" height="5" fill="#8db4da"/><rect x="27" y="19" width="5" height="9" fill="#3b3f44"/><rect x="2" y="28.6" width="11" height="10" fill="#5b86b4"/><rect x="2" y="32" width="11" height="6" fill="#4e7a45"/><rect x="13" y="28.6" width="22.5" height="10" fill="#86b0d8"/><rect x="13" y="33" width="22.5" height="5" fill="#6a8d5a"/><rect x="35" y="12" width="2" height="28" fill="#cfcfcf"/><rect x="37" y="19" width="34" height="1.6" fill="#7fae5f"/><rect x="37" y="21" width="34" height="7" fill="#b9cfe0"/><rect x="37" y="28" width="34" height="10" fill="#6b7f62"/><rect x="37" y="28" width="34" height="3" fill="#92a6b0"/><rect x="54.2" y="13.5" width="13.8" height="10" fill="#4f8a48"/><rect x="55" y="14" width="12" height="4" fill="#8ab58a"/></g><g clip-path="url(#inset)"><path d="M0,37.9 Q0,35.4 2.5,35.4 H24.5 Q26.1,35.4 26.7,34.5 L30.3,32.5 Q30.9,31.599999999999998 32.5,31.599999999999998 H71.5 Q74,31.599999999999998 74,34.099999999999994 V55.5 Q74,58 71.5,58 H2.5 Q0,58 0,55.5 Z" transform="translate(0,-1.6)" fill="#9a6a10" opacity=".16" filter="url(#fblur)"/></g><path d="M0,37.9 Q0,35.4 2.5,35.4 H24.5 Q26.1,35.4 26.7,34.5 L30.3,32.5 Q30.9,31.599999999999998 32.5,31.599999999999998 H71.5 Q74,31.599999999999998 74,34.099999999999994 V55.5 Q74,58 71.5,58 H2.5 Q0,58 0,55.5 Z" fill="url(#fFront)" stroke="#efb32e" stroke-width="0.5"/><path d="M2.5,57.6 H71.5" stroke="#e9a51c" stroke-width="0.9"/></g><g transform="translate(255,277.5)"><path d="M0,3 Q0,0 3,0 H24.3 Q26.8,0 28.4,2.2 L32,7.2 Q32.6,8 33.8,8 H71 Q74,8 74,11 V55 Q74,58 71,58 H3 Q0,58 0,55 Z" fill="url(#fBack)"/><path d="M2,11 Q2,9 4,9 H31.5 L27,14.2 H2Z" fill="url(#fPaper)"/><path d="M0,16.3 Q0,13.8 2.5,13.8 H26.5 Q28.1,13.8 28.7,12.9 L30.3,9.9 Q30.9,9.0 32.5,9.0 H71.5 Q74,9.0 74,11.5 V55.5 Q74,58 71.5,58 H2.5 Q0,58 0,55.5 Z" fill="url(#fFront)" stroke="#efb32e" stroke-width="0.5"/><path d="M2.5,57.6 H71.5" stroke="#e9a51c" stroke-width="0.9"/></g><g transform="translate(348,277.5)"><path d="M0,3 Q0,0 3,0 H24.3 Q26.8,0 28.4,2.2 L32,7.2 Q32.6,8 33.8,8 H71 Q74,8 74,11 V55 Q74,58 71,58 H3 Q0,58 0,55 Z" fill="url(#fBack)"/><g clip-path="url(#inset)"><rect x="0" y="0" width="74" height="40" fill="url(#thBG)"/><path d="M0,40 V36 Q10,33 17,30 Q20,29 24,28 Q32,26.5 43,26.5 Q52,26.5 61,27.5 Q66,28 72,29.5 V40Z" fill="#f2f2f0"/><path d="M10,40 Q20,33 30,31.5 Q44,30 60,31" stroke="#d4d4d4" stroke-width="1.2" fill="none"/><path d="M1.9,32 Q10,29 18.4,24.6 Q22,22.5 27,22.5 Q36,21.5 42.9,22.5 Q52,23 61,24.1 Q66,24.5 72,25.2 V29.5 Q66,28 61,27.5 Q52,26.5 43,26.5 Q32,26.5 24,28 Q20,29 17,30 Q10,33 1.9,36Z" fill="#2c8a40"/><path d="M20,24 Q26,22.5 30,23" stroke="#1b6a2c" stroke-width="1.2" fill="none"/><path d="M45,31 Q50,28.8 55,31 V40 H45Z" fill="#c8343a"/><path d="M58,27 Q61,29 62,33" stroke="#c0c0c0" stroke-width="1" fill="none"/></g><g clip-path="url(#inset)"><path d="M0,37.9 Q0,35.4 2.5,35.4 H24.5 Q26.1,35.4 26.7,34.5 L30.3,32.5 Q30.9,31.599999999999998 32.5,31.599999999999998 H71.5 Q74,31.599999999999998 74,34.099999999999994 V55.5 Q74,58 71.5,58 H2.5 Q0,58 0,55.5 Z" transform="translate(0,-1.6)" fill="#9a6a10" opacity=".16" filter="url(#fblur)"/></g><path d="M0,37.9 Q0,35.4 2.5,35.4 H24.5 Q26.1,35.4 26.7,34.5 L30.3,32.5 Q30.9,31.599999999999998 32.5,31.599999999999998 H71.5 Q74,31.599999999999998 74,34.099999999999994 V55.5 Q74,58 71.5,58 H2.5 Q0,58 0,55.5 Z" fill="url(#fFront)" stroke="#efb32e" stroke-width="0.5"/><path d="M2.5,57.6 H71.5" stroke="#e9a51c" stroke-width="0.9"/></g><g transform="translate(441,277.5)"><path d="M0,3 Q0,0 3,0 H24.3 Q26.8,0 28.4,2.2 L32,7.2 Q32.6,8 33.8,8 H71 Q74,8 74,11 V55 Q74,58 71,58 H3 Q0,58 0,55 Z" fill="url(#fBack)"/><g clip-path="url(#inset)"><rect x="0" y="0" width="74" height="40" fill="url(#thBG)"/><path d="M6.8,18 Q7,16 9,16 Q30,15 40,17 Q52,16 65,16.5 Q67.5,17 67.5,19 V40 H6.8Z" fill="#e2d6aa"/><rect x="10" y="18.8" width="32.4" height="22" fill="#14191a"/><rect x="42.4" y="18.8" width="24.5" height="22" fill="#3c3c3e"/><ellipse cx="54" cy="28" rx="10" ry="8" fill="#e9dcc4"/><circle cx="51" cy="25" r="2.6" fill="#d39a4e"/><circle cx="57" cy="30" r="2.2" fill="#c9904c"/><circle cx="55" cy="23" r="1.8" fill="#e4b46a"/><path d="M17,22.3 h21" stroke="#cdbf7c" stroke-width="1.3"/><path d="M14,29.5 h9 M24,29.5 h10" stroke="#86c04a" stroke-width="2.8"/><circle cx="13" cy="21" r="2" fill="#7a9e4a"/><rect x="11" y="25" width="2" height="8" fill="#7a5a2a"/></g><g clip-path="url(#inset)"><path d="M0,37.9 Q0,35.4 2.5,35.4 H24.5 Q26.1,35.4 26.7,34.5 L30.3,32.5 Q30.9,31.599999999999998 32.5,31.599999999999998 H71.5 Q74,31.599999999999998 74,34.099999999999994 V55.5 Q74,58 71.5,58 H2.5 Q0,58 0,55.5 Z" transform="translate(0,-1.6)" fill="#9a6a10" opacity=".16" filter="url(#fblur)"/></g><path d="M0,37.9 Q0,35.4 2.5,35.4 H24.5 Q26.1,35.4 26.7,34.5 L30.3,32.5 Q30.9,31.599999999999998 32.5,31.599999999999998 H71.5 Q74,31.599999999999998 74,34.099999999999994 V55.5 Q74,58 71.5,58 H2.5 Q0,58 0,55.5 Z" fill="url(#fFront)" stroke="#efb32e" stroke-width="0.5"/><path d="M2.5,57.6 H71.5" stroke="#e9a51c" stroke-width="0.9"/></g><g transform="translate(534,277.5)"><path d="M0,3 Q0,0 3,0 H24.3 Q26.8,0 28.4,2.2 L32,7.2 Q32.6,8 33.8,8 H71 Q74,8 74,11 V55 Q74,58 71,58 H3 Q0,58 0,55 Z" fill="url(#fBack)"/><g clip-path="url(#inset)"><rect x="0" y="0" width="74" height="40" fill="url(#lochG)"/></g><g clip-path="url(#inset)"><path d="M0,37.9 Q0,35.4 2.5,35.4 H24.5 Q26.1,35.4 26.7,34.5 L30.3,32.5 Q30.9,31.599999999999998 32.5,31.599999999999998 H71.5 Q74,31.599999999999998 74,34.099999999999994 V55.5 Q74,58 71.5,58 H2.5 Q0,58 0,55.5 Z" transform="translate(0,-1.6)" fill="#9a6a10" opacity=".16" filter="url(#fblur)"/></g><path d="M0,37.9 Q0,35.4 2.5,35.4 H24.5 Q26.1,35.4 26.7,34.5 L30.3,32.5 Q30.9,31.599999999999998 32.5,31.599999999999998 H71.5 Q74,31.599999999999998 74,34.099999999999994 V55.5 Q74,58 71.5,58 H2.5 Q0,58 0,55.5 Z" fill="url(#fFront)" stroke="#efb32e" stroke-width="0.5"/><path d="M2.5,57.6 H71.5" stroke="#e9a51c" stroke-width="0.9"/></g><g transform="translate(627,277.5)"><path d="M0,3 Q0,0 3,0 H24.3 Q26.8,0 28.4,2.2 L32,7.2 Q32.6,8 33.8,8 H71 Q74,8 74,11 V55 Q74,58 71,58 H3 Q0,58 0,55 Z" fill="url(#fBack)"/><g clip-path="url(#inset)"><rect x="0" y="0" width="74" height="40" fill="url(#thBG)"/><g fill="none" stroke="#111" stroke-width="2.4" stroke-linecap="round"><path d="M9.5,19 Q6,25 7.5,36 Q10,35 11,25 Q11.2,20 9.5,19"/><path d="M18.5,19 Q20,26 18.5,36 M16.5,18 Q13,22 14,26 M20,21 Q23,23 22,29"/><path d="M27,20 Q28,28 25.5,36 M29,19 Q31,25 30,31"/><path d="M35,21 Q33,30 35,34 Q41,34 45,33 M42,18 Q44,26 45,34 M38,23 Q40,21 43,20"/><path d="M51,19 Q50,28 50.5,36 M54.5,20 Q56.5,27 57.5,35 M55,21 Q60.5,22 60,27"/></g><g fill="#111"><circle cx="25.2" cy="15.8" r="3"/><circle cx="38" cy="11.8" r="2"/></g><g fill="#f3e6c0" stroke="#111" stroke-width="1.2"><circle cx="16.3" cy="12.3" r="1.8"/><circle cx="52.4" cy="13" r="2"/></g></g><g clip-path="url(#inset)"><path d="M0,37.9 Q0,35.4 2.5,35.4 H24.5 Q26.1,35.4 26.7,34.5 L30.3,32.5 Q30.9,31.599999999999998 32.5,31.599999999999998 H71.5 Q74,31.599999999999998 74,34.099999999999994 V55.5 Q74,58 71.5,58 H2.5 Q0,58 0,55.5 Z" transform="translate(0,-1.6)" fill="#9a6a10" opacity=".16" filter="url(#fblur)"/></g><path d="M0,37.9 Q0,35.4 2.5,35.4 H24.5 Q26.1,35.4 26.7,34.5 L30.3,32.5 Q30.9,31.599999999999998 32.5,31.599999999999998 H71.5 Q74,31.599999999999998 74,34.099999999999994 V55.5 Q74,58 71.5,58 H2.5 Q0,58 0,55.5 Z" fill="url(#fFront)" stroke="#efb32e" stroke-width="0.5"/><path d="M2.5,57.6 H71.5" stroke="#e9a51c" stroke-width="0.9"/></g><g transform="translate(720,277.5)"><path d="M0,3 Q0,0 3,0 H24.3 Q26.8,0 28.4,2.2 L32,7.2 Q32.6,8 33.8,8 H71 Q74,8 74,11 V55 Q74,58 71,58 H3 Q0,58 0,55 Z" fill="url(#fBack)"/><g clip-path="url(#inset)"><rect x="0" y="0" width="74" height="40" fill="url(#thBG)"/><path d="M4,40 L5,35 Q7,30 13,28.5 Q17,27.5 19,25 Q21,22 24,20 L26,16 L27.5,12 L29.5,14.5 L31,10.5 L33,13.5 L35,10.5 L37,13.5 L39,10.5 L40.5,14 L43,11 L43.5,14.5 L46.5,12 L46,16 Q49,18 51.5,21 Q54,25 58,26 Q64,27.5 66.5,30 Q68,32 68,35 L68.5,40 Z" fill="#232323"/><path d="M56,24 l1,3" stroke="#f3d68f" stroke-width=".6"/></g><g clip-path="url(#inset)"><path d="M0,37.9 Q0,35.4 2.5,35.4 H24.5 Q26.1,35.4 26.7,34.5 L30.3,32.5 Q30.9,31.599999999999998 32.5,31.599999999999998 H71.5 Q74,31.599999999999998 74,34.099999999999994 V55.5 Q74,58 71.5,58 H2.5 Q0,58 0,55.5 Z" transform="translate(0,-1.6)" fill="#9a6a10" opacity=".16" filter="url(#fblur)"/></g><path d="M0,37.9 Q0,35.4 2.5,35.4 H24.5 Q26.1,35.4 26.7,34.5 L30.3,32.5 Q30.9,31.599999999999998 32.5,31.599999999999998 H71.5 Q74,31.599999999999998 74,34.099999999999994 V55.5 Q74,58 71.5,58 H2.5 Q0,58 0,55.5 Z" fill="url(#fFront)" stroke="#efb32e" stroke-width="0.5"/><path d="M2.5,57.6 H71.5" stroke="#e9a51c" stroke-width="0.9"/></g><g transform="translate(813,277.5)"><path d="M0,3 Q0,0 3,0 H24.3 Q26.8,0 28.4,2.2 L32,7.2 Q32.6,8 33.8,8 H71 Q74,8 74,11 V55 Q74,58 71,58 H3 Q0,58 0,55 Z" fill="url(#fBack)"/><g clip-path="url(#inset)"><rect x="0" y="0" width="74" height="40" fill="url(#thBG)"/><path d="M19.5,14.5 L23,27 L29.5,21Z" fill="#c17a38"/><path d="M21,17 L24,24.5 L27.5,21.5Z" fill="#e7a56a"/><ellipse cx="34" cy="25" rx="9" ry="9" fill="#c98a40"/><ellipse cx="36" cy="30.5" rx="6" ry="3.6" fill="#f0d9b4"/><circle cx="31.5" cy="23.5" r="1.2" fill="#2a1a10"/><circle cx="38.5" cy="23.5" r="1.2" fill="#2a1a10"/><ellipse cx="40.5" cy="26.5" rx="2" ry="1.4" fill="#2a1a10"/><path d="M25,19 Q26,10.5 33,10.3 Q41,10 41.5,17 L41,19.8 Q33,17 25,20Z" fill="#2b4f8e"/><path d="M25.5,18.5 Q33,16.5 41,18.5" stroke="#e8c040" stroke-width="0.9" fill="none"/><circle cx="33.5" cy="14" r="1.6" fill="#e0e6f0"/><path d="M41.5,28 Q42,19 51,19 Q58.5,19.3 60,26.5 L62,28.3 Q52,27.3 41.5,28.8Z" fill="#d7262c"/><circle cx="51" cy="22.8" r="1.6" fill="#f0f0f0"/><ellipse cx="51" cy="32.5" rx="7.5" ry="5" fill="#e8e8ea"/><circle cx="48.5" cy="31" r=".9" fill="#333"/><circle cx="53.5" cy="31" r=".9" fill="#333"/><path d="M12.5,34.5 Q12.8,27.5 18.5,27.5 Q24.5,27.8 24.8,34.5Z" fill="#f0d02a"/><circle cx="18.5" cy="30.3" r="1.2" fill="#f5f5f5"/><ellipse cx="20" cy="37.5" rx="6.5" ry="3.5" fill="#c78a4a"/></g><g clip-path="url(#inset)"><path d="M0,37.9 Q0,35.4 2.5,35.4 H24.5 Q26.1,35.4 26.7,34.5 L30.3,32.5 Q30.9,31.599999999999998 32.5,31.599999999999998 H71.5 Q74,31.599999999999998 74,34.099999999999994 V55.5 Q74,58 71.5,58 H2.5 Q0,58 0,55.5 Z" transform="translate(0,-1.6)" fill="#9a6a10" opacity=".16" filter="url(#fblur)"/></g><path d="M0,37.9 Q0,35.4 2.5,35.4 H24.5 Q26.1,35.4 26.7,34.5 L30.3,32.5 Q30.9,31.599999999999998 32.5,31.599999999999998 H71.5 Q74,31.599999999999998 74,34.099999999999994 V55.5 Q74,58 71.5,58 H2.5 Q0,58 0,55.5 Z" fill="url(#fFront)" stroke="#efb32e" stroke-width="0.5"/><path d="M2.5,57.6 H71.5" stroke="#e9a51c" stroke-width="0.9"/></g><g transform="translate(162,396)"><path d="M0,3 Q0,0 3,0 H24.3 Q26.8,0 28.4,2.2 L32,7.2 Q32.6,8 33.8,8 H71 Q74,8 74,11 V55 Q74,58 71,58 H3 Q0,58 0,55 Z" fill="url(#fBack)"/><g clip-path="url(#inset)"><rect x="0" y="0" width="74" height="40" fill="url(#thBG)"/><rect x="2" y="10.5" width="70" height="6" fill="#eccb82"/><path d="M10,33.5 Q18,31.8 27,33 L27,36 Q18,35.5 10,36Z" fill="#2e2718"/></g><g clip-path="url(#inset)"><path d="M0,37.9 Q0,35.4 2.5,35.4 H24.5 Q26.1,35.4 26.7,34.5 L30.3,32.5 Q30.9,31.599999999999998 32.5,31.599999999999998 H71.5 Q74,31.599999999999998 74,34.099999999999994 V55.5 Q74,58 71.5,58 H2.5 Q0,58 0,55.5 Z" transform="translate(0,-1.6)" fill="#9a6a10" opacity=".16" filter="url(#fblur)"/></g><path d="M0,37.9 Q0,35.4 2.5,35.4 H24.5 Q26.1,35.4 26.7,34.5 L30.3,32.5 Q30.9,31.599999999999998 32.5,31.599999999999998 H71.5 Q74,31.599999999999998 74,34.099999999999994 V55.5 Q74,58 71.5,58 H2.5 Q0,58 0,55.5 Z" fill="url(#fFront)" stroke="#efb32e" stroke-width="0.5"/><path d="M2.5,57.6 H71.5" stroke="#e9a51c" stroke-width="0.9"/></g><g transform="translate(255,396)"><path d="M0,3 Q0,0 3,0 H24.3 Q26.8,0 28.4,2.2 L32,7.2 Q32.6,8 33.8,8 H71 Q74,8 74,11 V55 Q74,58 71,58 H3 Q0,58 0,55 Z" fill="url(#fBack)"/><g clip-path="url(#inset)"><rect x="0" y="0" width="74" height="40" fill="url(#thBG)"/><path d="M2.5,10.5 H59 L69.5,16 V40 H2.5Z" fill="#f7f7f7"/><path d="M59,10.5 V16 H69.5Z" fill="#e0e0e0"/><path d="M59,10.5 V16 H69.5" fill="none" stroke="#bdbdbd" stroke-width="0.6"/><path d="M21,24 Q18,19 19.5,18.5 Q21.5,20 22,23 Q23,19 24.5,19.5 Q25,22 23,25 Q27,25 26.5,29 Q25,34 22,34 Q19,34 19,30 Q19,27 21,24Z" fill="#f5f5f5" stroke="#444" stroke-width="0.8"/><path d="M20,32 h5" stroke="#555" stroke-width="1"/><rect x="33" y="24" width="1.6" height="3" fill="#111"/></g><g clip-path="url(#inset)"><path d="M0,37.9 Q0,35.4 2.5,35.4 H24.5 Q26.1,35.4 26.7,34.5 L30.3,32.5 Q30.9,31.599999999999998 32.5,31.599999999999998 H71.5 Q74,31.599999999999998 74,34.099999999999994 V55.5 Q74,58 71.5,58 H2.5 Q0,58 0,55.5 Z" transform="translate(0,-1.6)" fill="#9a6a10" opacity=".16" filter="url(#fblur)"/></g><path d="M0,37.9 Q0,35.4 2.5,35.4 H24.5 Q26.1,35.4 26.7,34.5 L30.3,32.5 Q30.9,31.599999999999998 32.5,31.599999999999998 H71.5 Q74,31.599999999999998 74,34.099999999999994 V55.5 Q74,58 71.5,58 H2.5 Q0,58 0,55.5 Z" fill="url(#fFront)" stroke="#efb32e" stroke-width="0.5"/><path d="M2.5,57.6 H71.5" stroke="#e9a51c" stroke-width="0.9"/></g><g transform="translate(348,396)"><path d="M0,3 Q0,0 3,0 H24.3 Q26.8,0 28.4,2.2 L32,7.2 Q32.6,8 33.8,8 H71 Q74,8 74,11 V55 Q74,58 71,58 H3 Q0,58 0,55 Z" fill="url(#fBack)"/><g clip-path="url(#inset)"><rect x="0" y="0" width="74" height="40" fill="url(#thBG)"/><ellipse cx="29" cy="35" rx="10.5" ry="5.5" transform="rotate(-22 29 35)" fill="#faf3c4"/><path d="M31.9,10.5 H62.7 L61.5,40 H33Z" fill="#d5d5d5"/><path d="M31.9,10.5 H62.7 L62.3,17 Q47,20.5 32.5,17Z" fill="#0e0e14"/><path d="M33,18 Q47,21 62,18" fill="none" stroke="#555" stroke-width="1"/><rect x="33" y="19" width="4.5" height="21" fill="#9a9a9a"/><path d="M34,22 h2 M34,25 h2 M34,28 h2" stroke="#333" stroke-width=".8"/><rect x="58.5" y="19" width="3.5" height="21" fill="#a5a5a5"/><text x="41.5" y="29" font-family="Liberation Sans" font-size="8" fill="#1a1a1a">FILM</text><path d="M63,10.5 L70,11 L68.5,18 L63,20Z" fill="#4a3a32"/></g><g clip-path="url(#inset)"><path d="M0,37.9 Q0,35.4 2.5,35.4 H24.5 Q26.1,35.4 26.7,34.5 L30.3,32.5 Q30.9,31.599999999999998 32.5,31.599999999999998 H71.5 Q74,31.599999999999998 74,34.099999999999994 V55.5 Q74,58 71.5,58 H2.5 Q0,58 0,55.5 Z" transform="translate(0,-1.6)" fill="#9a6a10" opacity=".16" filter="url(#fblur)"/></g><path d="M0,37.9 Q0,35.4 2.5,35.4 H24.5 Q26.1,35.4 26.7,34.5 L30.3,32.5 Q30.9,31.599999999999998 32.5,31.599999999999998 H71.5 Q74,31.599999999999998 74,34.099999999999994 V55.5 Q74,58 71.5,58 H2.5 Q0,58 0,55.5 Z" fill="url(#fFront)" stroke="#efb32e" stroke-width="0.5"/><path d="M2.5,57.6 H71.5" stroke="#e9a51c" stroke-width="0.9"/></g><g transform="translate(441,396)"><path d="M0,3 Q0,0 3,0 H24.3 Q26.8,0 28.4,2.2 L32,7.2 Q32.6,8 33.8,8 H71 Q74,8 74,11 V55 Q74,58 71,58 H3 Q0,58 0,55 Z" fill="url(#fBack)"/><g clip-path="url(#inset)"><rect x="0" y="0" width="74" height="40" fill="url(#thBG)"/><rect x="0" y="10" width="74" height="8" fill="#eecd86"/><g fill="#f7f7f7" stroke="#8a8a8a" stroke-width="0.7"><circle cx="5" cy="14.5" r="2.2"/><path d="M2,19.5 H7 V40 H2Z"/><path d="M9,28 Q9,19.5 18,19.5 Q27,19.5 27,28 Q27,37 18,37 Q9,37 9,28Z M14,28 Q14,23.5 18,23.5 Q22,23.5 22,28 Q22,33 18,33 Q14,33 14,28Z"/><path d="M33,12 L41,10.5 V36 H44 V40 H33 V36 H36 V14 H33Z"/><path d="M48,19.5 H54 V32 Q54,34 57,34 Q61,34 61,30 V19.5 H67 V36 H71 V40 H48 V36 H48Z"/></g></g><g clip-path="url(#inset)"><path d="M0,37.9 Q0,35.4 2.5,35.4 H24.5 Q26.1,35.4 26.7,34.5 L30.3,32.5 Q30.9,31.599999999999998 32.5,31.599999999999998 H71.5 Q74,31.599999999999998 74,34.099999999999994 V55.5 Q74,58 71.5,58 H2.5 Q0,58 0,55.5 Z" transform="translate(0,-1.6)" fill="#9a6a10" opacity=".16" filter="url(#fblur)"/></g><path d="M0,37.9 Q0,35.4 2.5,35.4 H24.5 Q26.1,35.4 26.7,34.5 L30.3,32.5 Q30.9,31.599999999999998 32.5,31.599999999999998 H71.5 Q74,31.599999999999998 74,34.099999999999994 V55.5 Q74,58 71.5,58 H2.5 Q0,58 0,55.5 Z" fill="url(#fFront)" stroke="#efb32e" stroke-width="0.5"/><path d="M2.5,57.6 H71.5" stroke="#e9a51c" stroke-width="0.9"/></g><g transform="translate(534,396)"><path d="M0,3 Q0,0 3,0 H24.3 Q26.8,0 28.4,2.2 L32,7.2 Q32.6,8 33.8,8 H71 Q74,8 74,11 V55 Q74,58 71,58 H3 Q0,58 0,55 Z" fill="url(#fBack)"/><g clip-path="url(#inset)"><rect x="0" y="0" width="74" height="40" fill="#fbf39b"/><path d="M11,10 Q5,20 5.5,40" fill="none" stroke="#5e9a5a" stroke-width="0.9"/><rect x="2.3" y="10" width="2" height="30" fill="#e8eda6"/></g><g clip-path="url(#inset)"><path d="M0,37.9 Q0,35.4 2.5,35.4 H24.5 Q26.1,35.4 26.7,34.5 L30.3,32.5 Q30.9,31.599999999999998 32.5,31.599999999999998 H71.5 Q74,31.599999999999998 74,34.099999999999994 V55.5 Q74,58 71.5,58 H2.5 Q0,58 0,55.5 Z" transform="translate(0,-1.6)" fill="#9a6a10" opacity=".16" filter="url(#fblur)"/></g><path d="M0,37.9 Q0,35.4 2.5,35.4 H24.5 Q26.1,35.4 26.7,34.5 L30.3,32.5 Q30.9,31.599999999999998 32.5,31.599999999999998 H71.5 Q74,31.599999999999998 74,34.099999999999994 V55.5 Q74,58 71.5,58 H2.5 Q0,58 0,55.5 Z" fill="url(#fFront)" stroke="#efb32e" stroke-width="0.5"/><path d="M2.5,57.6 H71.5" stroke="#e9a51c" stroke-width="0.9"/></g><g transform="translate(627,396)"><path d="M0,3 Q0,0 3,0 H24.3 Q26.8,0 28.4,2.2 L32,7.2 Q32.6,8 33.8,8 H71 Q74,8 74,11 V55 Q74,58 71,58 H3 Q0,58 0,55 Z" fill="url(#fBack)"/><g clip-path="url(#inset)"><rect x="0" y="0" width="74" height="40" fill="url(#thBG)"/><rect x="2.3" y="10.5" width="69" height="30" fill="#fafafa"/><path d="M12,10 V40 M61.5,10 V40" stroke="#8d8d8d" stroke-width="0.8"/><g stroke="#9a9a9a" stroke-width=".6"><path d="M16,12 h26 M16,14.5 h32 M16,18 h18 M16,20.5 h22 M16,25.5 h4 M16,31 h13 M16,33.5 h16"/></g></g><g clip-path="url(#inset)"><path d="M0,37.9 Q0,35.4 2.5,35.4 H24.5 Q26.1,35.4 26.7,34.5 L30.3,32.5 Q30.9,31.599999999999998 32.5,31.599999999999998 H71.5 Q74,31.599999999999998 74,34.099999999999994 V55.5 Q74,58 71.5,58 H2.5 Q0,58 0,55.5 Z" transform="translate(0,-1.6)" fill="#9a6a10" opacity=".16" filter="url(#fblur)"/></g><path d="M0,37.9 Q0,35.4 2.5,35.4 H24.5 Q26.1,35.4 26.7,34.5 L30.3,32.5 Q30.9,31.599999999999998 32.5,31.599999999999998 H71.5 Q74,31.599999999999998 74,34.099999999999994 V55.5 Q74,58 71.5,58 H2.5 Q0,58 0,55.5 Z" fill="url(#fFront)" stroke="#efb32e" stroke-width="0.5"/><path d="M2.5,57.6 H71.5" stroke="#e9a51c" stroke-width="0.9"/></g>
<!-- outside frame -->
<defs><linearGradient id="outG" x1="0" y1="0" x2="0" y2="7" gradientUnits="userSpaceOnUse"><stop offset="0" stop-color="#f0f0f0"/><stop offset="1" stop-color="#e2e2e2"/></linearGradient></defs>
<path d="M0,0 H900 V611 H899 V14.5 Q899,6.5 891,6.5 H8 Q0,6.5 0,14.5 Z" fill="url(#outG)"/>
<rect x="899" y="7" width="1" height="604" fill="#e6e6e6"/>
<path d="M0,14.5 Q0,6.5 8,6.5 H890.5 Q898.5,6.5 898.5,14.5 V611" fill="none" stroke="#bcbcbc" stroke-width="1"/>
<path d="M0,604 Q0,611 7,611 H0Z" fill="#dcdcdc"/><path d="M0,604 Q0,611 7,611" fill="none" stroke="#b0b0b0" stroke-width="1"/>
<path d="M898,604 Q898,611 891,611 H900 V604Z" fill="#dcdcdc"/><path d="M898,604 Q898,611 891,611" fill="none" stroke="#b0b0b0" stroke-width="1"/>
</svg>
</body></html>
